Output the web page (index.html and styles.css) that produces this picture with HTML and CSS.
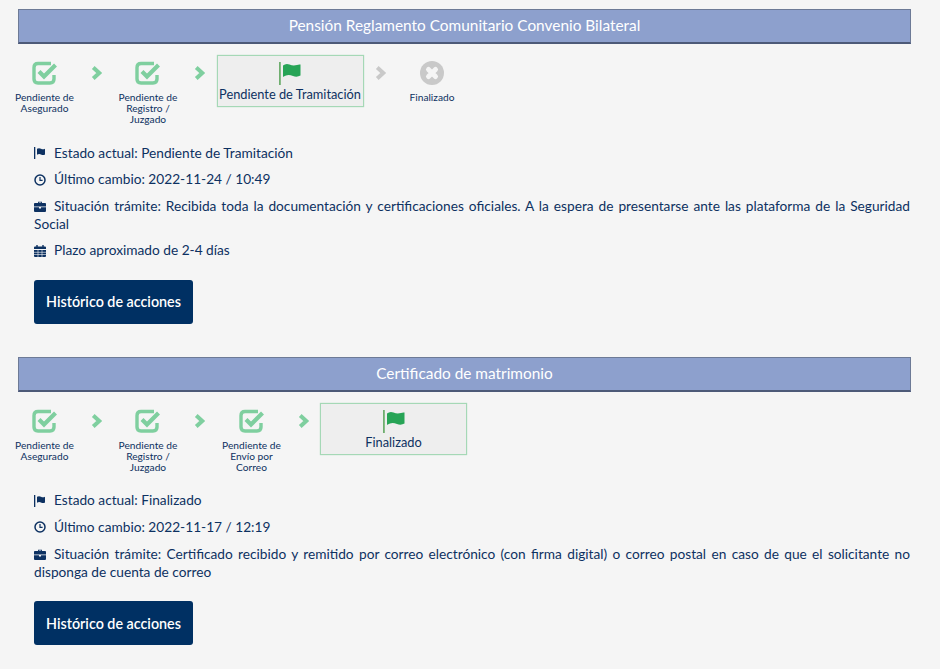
FILE: index.html
```html
<!DOCTYPE html>
<html lang="es">
<head>
<meta charset="utf-8">
<title>Trámites</title>
<link rel="stylesheet" href="styles.css">
</head>
<body>
<svg class="defs" width="0" height="0" aria-hidden="true">
  <symbol id="check" viewBox="0 0 26 24">
    <path d="M19 2.500H6Q2 2.500 2 6.500V18Q2 22 6 22H18Q22 22 22 18V14" fill="none" stroke="currentColor" stroke-width="3.400"/>
    <path d="M7 10.500l5 5L23.500 4" fill="none" stroke="currentColor" stroke-width="4.200"/>
  </symbol>
  <symbol id="chev" viewBox="0 0 12 14">
    <path d="M2.500 1.500L8.500 7l-6 5.500" fill="none" stroke="currentColor" stroke-width="4"/>
  </symbol>
  <symbol id="times" viewBox="0 0 24 24">
    <circle cx="12" cy="12" r="12" fill="currentColor"/>
    <path d="M8.500 8.500l7 7M15.500 8.500l-7 7" stroke="#f5f5f5" stroke-width="5" stroke-linecap="round"/>
  </symbol>
  <symbol id="bigflag" viewBox="0 0 22 23">
    <rect x="0" y="0" width="1.800" height="23" fill="#6fae6f"/>
    <path d="M4 3.500Q7 1 10.500 2.500T18 3 21.500 2.200V13.500Q18 15.500 14 14T7 13.500 4 15Z" fill="#27a456"/>
  </symbol>
  <symbol id="flag" viewBox="0 0 12 12">
    <rect x="0" y="0" width="1.300" height="12" fill="currentColor"/>
    <path d="M3 1.800Q5 .8 7 1.800T11 1.800V7.500Q9 8.500 7 7.500T3 7.800Z" fill="currentColor"/>
  </symbol>
  <symbol id="clock" viewBox="0 0 12 12">
    <circle cx="6" cy="6" r="5" fill="none" stroke="currentColor" stroke-width="1.500"/>
    <path d="M6 3v3.300h2.600" fill="none" stroke="currentColor" stroke-width="1.200"/>
  </symbol>
  <symbol id="case" viewBox="0 0 12 11">
    <path d="M4 2V.8h4V2h3.200Q12 2 12 3v2.500H0V3Q0 2 .8 2ZM4.800 1.500V2h2.400v-.5ZM0 6.300h5V7.500h2V6.300h5V10Q12 11 11 11H1Q0 11 0 10Z" fill="currentColor"/>
  </symbol>
  <symbol id="cal" viewBox="0 0 12 12">
    <path d="M1 1.500h10q1 0 1 1V4H0V2.500q0-1 1-1ZM0 5h12v6q0 1-1 1H1q-1 0-1-1Z" fill="currentColor"/>
    <path d="M3 0v2M9 0v2" stroke="currentColor" stroke-width="1.400"/>
    <path d="M0 7.300h12M0 9.500h12M4 5v7M8 5v7" stroke="#f5f5f5" stroke-width=".6"/>
  </symbol>
</svg>

<main class="page">
  <section class="tramite">
    <h2 class="bar">Pensión Reglamento Comunitario Convenio Bilateral</h2>
    <div class="steps">
      <div class="step"><svg class="ic-check"><use href="#check"/></svg><span>Pendiente de Asegurado</span></div>
      <svg class="arrow"><use href="#chev"/></svg>
      <div class="step"><svg class="ic-check"><use href="#check"/></svg><span>Pendiente de Registro / Juzgado</span></div>
      <svg class="arrow"><use href="#chev"/></svg>
      <div class="current"><svg class="ic-flag"><use href="#bigflag"/></svg><span>Pendiente de Tramitación</span></div>
      <svg class="arrow off"><use href="#chev"/></svg>
      <div class="step pending"><svg class="ic-times"><use href="#times"/></svg><span>Finalizado</span></div>
    </div>
    <div class="info">
      <p><svg class="ic"><use href="#flag"/></svg>Estado actual: Pendiente de Tramitación</p>
      <p><svg class="ic"><use href="#clock"/></svg>Último cambio: 2022-11-24 / 10:49</p>
      <p class="just"><svg class="ic"><use href="#case"/></svg>Situación trámite: Recibida toda la documentación y certificaciones oficiales. A la espera de presentarse ante las plataforma de la Seguridad Social</p>
      <p><svg class="ic"><use href="#cal"/></svg>Plazo aproximado de 2-4 días</p>
    </div>
    <button class="btn">Histórico de acciones</button>
  </section>

  <section class="tramite">
    <h2 class="bar">Certificado de matrimonio</h2>
    <div class="steps">
      <div class="step"><svg class="ic-check"><use href="#check"/></svg><span>Pendiente de Asegurado</span></div>
      <svg class="arrow"><use href="#chev"/></svg>
      <div class="step"><svg class="ic-check"><use href="#check"/></svg><span>Pendiente de Registro / Juzgado</span></div>
      <svg class="arrow"><use href="#chev"/></svg>
      <div class="step"><svg class="ic-check"><use href="#check"/></svg><span>Pendiente de Envío por Correo</span></div>
      <svg class="arrow"><use href="#chev"/></svg>
      <div class="current"><svg class="ic-flag"><use href="#bigflag"/></svg><span>Finalizado</span></div>
    </div>
    <div class="info">
      <p><svg class="ic"><use href="#flag"/></svg>Estado actual: Finalizado</p>
      <p><svg class="ic"><use href="#clock"/></svg>Último cambio: 2022-11-17 / 12:19</p>
      <p class="just"><svg class="ic"><use href="#case"/></svg>Situación trámite: Certificado recibido y remitido por correo electrónico (con firma digital) o correo postal en caso de que el solicitante no disponga de cuenta de correo</p>
    </div>
    <button class="btn">Histórico de acciones</button>
  </section>
</main>
</body>
</html>
```
FILE: styles.css
```css
* { box-sizing: border-box; }
html, body { margin: 0; padding: 0; background: #f5f5f5; }
body {
  font-family: Lato, "Open Sans", sans-serif;
  color: #0d3161;
  overflow: hidden;
  height: 669px;
}
.defs { position: absolute; }
.page { padding-top: 9px; display: flex; flex-direction: column; gap: 33px; }
.bar {
  margin: 0 29px 0 18px;
  height: 35px;
  background: #8da0cd;
  border: 1px solid #6d7a96;
  border-bottom: 2px solid #4d5a78;
  color: #fff;
  font-size: 15.4px;
  font-weight: 400;
  line-height: 30px;
  text-align: center;
}
.steps {
  display: flex;
  align-items: flex-start;
  padding: 11px 0 0 9.5px;
  height: 97.5px;
}
.step {
  width: 70px;
  display: flex;
  flex-direction: column;
  align-items: center;
  padding-top: 6px;
  font-size: 10.2px;
  line-height: 11px;
  text-align: center;
}
.step span { display: block; width: 66px; margin-top: 7px; }
.ic-check { width: 26px; height: 24px; color: #7fcf9f; }
.ic-times { width: 24px; height: 24px; color: #c9c9c9; }
.arrow { width: 33.5px; height: 14px; margin-top: 11px; color: #7fcf9f; flex: none; }
.arrow.off { color: #c9c9c9; }
.current {
  width: 147px;
  height: 52px;
  flex: none;
  background: #eeeeee;
  border: 1px solid #a5d8b6;
  box-shadow: 0 0 1px #a5d8b6;
  display: flex;
  flex-direction: column;
  align-items: center;
  padding-top: 6px;
  font-size: 12.8px;
  line-height: 16px;
  white-space: nowrap;
}
.current span { margin-top: 1px; }
.ic-flag { width: 22px; height: 23px; }
.info {
  padding: 0 30px 0 34px;
  font-size: 13.7px;
  line-height: 18px;
  margin-top: 2px;
}
.info p { margin: 0 0 8.6px; }
.just { text-align: justify; }
.ic { width: 12px; height: 12px; margin-right: 8px; vertical-align: -1.500px; color: #0d3161; }
.just .ic { height: 11px; }
.btn {
  display: block;
  margin: 20.600px 0 0 34px;
  width: 159px;
  height: 44px;
  background: #003063;
  border: 0;
  border-radius: 3px;
  color: #fff;
  font-family: inherit;
  font-size: 14.3px;
  font-weight: 600;
  padding: 0;
}
```
